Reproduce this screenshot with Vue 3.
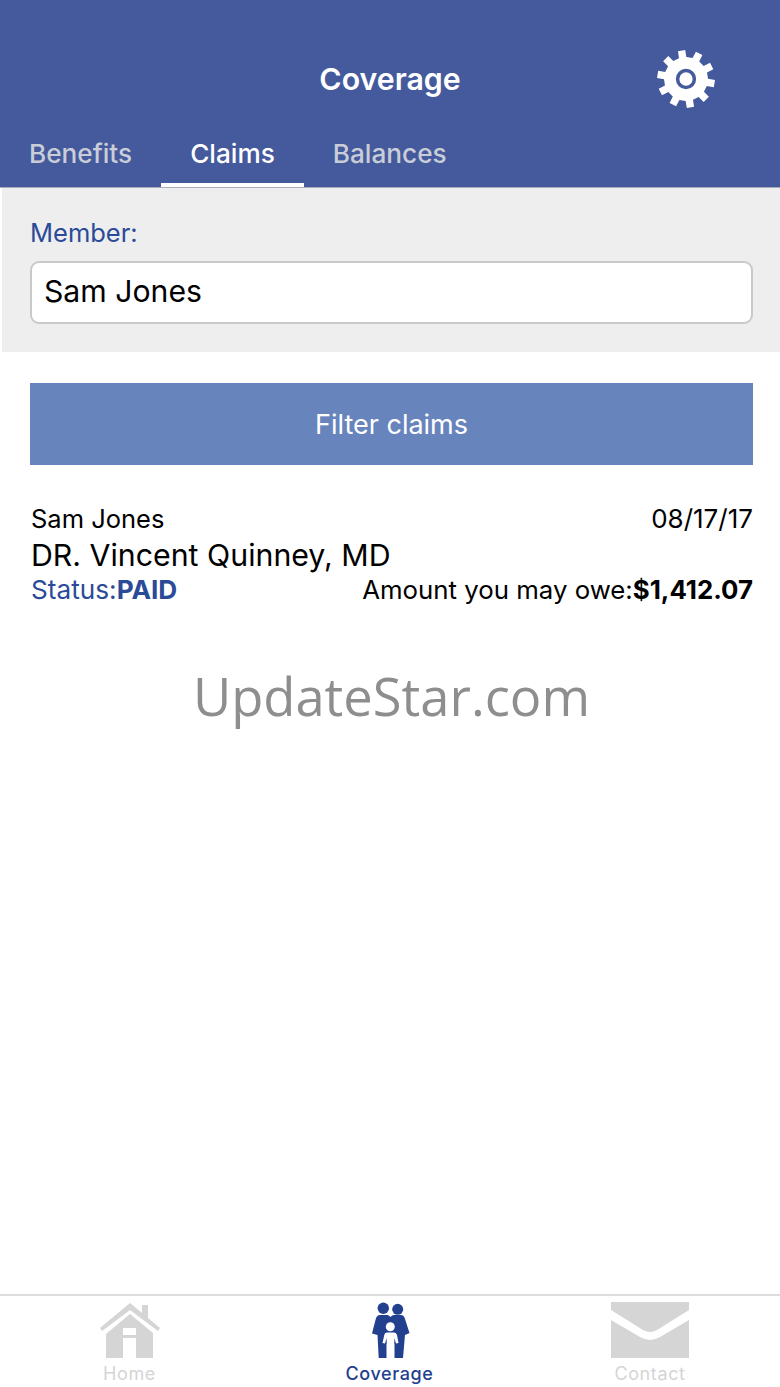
<script setup>
import { computed } from 'vue';

const tabs = [
  { label: 'Benefits' },
  { label: 'Claims', active: true },
  { label: 'Balances' },
];

// gear outline with 10 square-ish teeth
const gearPath = computed(() => {
  const teeth = 10;
  const cx = 30;
  const cy = 30;
  const inner = 22;
  const outer = 29;
  let d = '';
  for (let i = 0; i < teeth; i++) {
    const a = (i / teeth) * Math.PI * 2 + 0.16;
    const step = (Math.PI * 2) / teeth;
    const pts = [
      [inner, a - step * 0.27],
      [outer, a - step * 0.2],
      [outer, a + step * 0.2],
      [inner, a + step * 0.27],
    ];
    pts.forEach(([r, t], j) => {
      const x = (cx + r * Math.cos(t)).toFixed(2);
      const y = (cy + r * Math.sin(t)).toFixed(2);
      d += `${i === 0 && j === 0 ? 'M' : 'L'}${x} ${y} `;
    });
  }
  return d + 'Z';
});
</script>

<template>
  <div class="page">
    <header class="head">
      <div class="title-row">
        <h1 class="title">Coverage</h1>
        <svg class="gear" viewBox="0 0 60 60" aria-label="Settings">
          <path :d="gearPath" fill="#fff" />
          <circle cx="30" cy="30" r="8.400" fill="none" stroke="#445a9c" stroke-width="3.500" />
        </svg>
      </div>
      <nav class="tabs">
        <div v-for="t in tabs" :key="t.label" class="tab" :class="{ on: t.active }">{{ t.label }}</div>
      </nav>
    </header>

    <section class="member">
      <div class="member-label">Member:</div>
      <div class="member-input">Sam Jones</div>
    </section>

    <main class="content">
      <button class="filter">Filter claims</button>

      <div class="claim">
        <div class="row row-top">
          <span>Sam Jones</span>
          <span class="date">08/17/17</span>
        </div>
        <div class="doctor">DR. Vincent Quinney, MD</div>
        <div class="row row-bottom">
          <span class="status">Status:<b>PAID</b></span>
          <span>Amount you may owe:<b>$1,412.07</b></span>
        </div>
      </div>

      <div class="watermark">UpdateStar.com</div>
    </main>

    <footer class="tabbar">
      <div class="bar-item">
        <svg class="bar-icon" width="60" height="56" viewBox="0 0 60 56">
          <path d="M30 1 L42 11 V3 H48 V16 L60 26 L58 29 L30 8 L2 29 L0 26 Z" fill="#d5d5d5" />
          <path fill-rule="evenodd" d="M30 12 L53 31 V56 H36 V36 H23 V56 H6 V32 Z M23 26 V33 H36 V26 Z" fill="#d5d5d5" />
        </svg>
        <span>Home</span>
      </div>
      <div class="bar-item active">
        <svg class="bar-icon" width="40" height="56" viewBox="0 0 40 56">
          <circle cx="13.300" cy="6.300" r="5.700" fill="#23408f" />
          <circle cx="27.700" cy="7.300" r="5.500" fill="#23408f" />
          <path d="M10 13 H17 Q19 13 20.500 15 Q22 13 24 13 H31 Q34 13 35 17 L39.500 31 L35 33 L33 56 H24.300 V42 H16.700 V56 H8.700 L7.500 33 L2 31.500 L5.500 18 Q6.500 13 10 13 Z" fill="#23408f" />
          <circle cx="20.300" cy="24.700" r="4.500" fill="#fff" />
          <path d="M14.300 33 Q14.500 30.500 17 30.500 H24 Q26.500 30.500 27 33 L28.500 41 L26 41.500 L24.300 36 V56 H21 V43 H19.800 V56 H16.700 V36 L15 41.500 L12.500 41 Z" fill="#fff" />
        </svg>
        <span>Coverage</span>
      </div>
      <div class="bar-item">
        <svg class="bar-icon" width="78" height="56" viewBox="0 0 78 56">
          <path d="M0 0 H78 V8 L46 28 Q39 32 32 28 L0 8 Z" fill="#d5d5d5" />
          <path d="M0 18 L29 35 Q39 41 49 35 L78 18 V56 H0 Z" fill="#d5d5d5" />
        </svg>
        <span>Contact</span>
      </div>
    </footer>
  </div>
</template>

<style scoped>
.page {
  display: flex;
  flex-direction: column;
  min-height: 1387px;
  background: #fff;
  font-family: Inter, "Liberation Sans", sans-serif;
  color: #000;
}
.head {
  height: 188px;
  box-sizing: border-box;
  background: #445a9c;
  border-bottom: 1px solid #a9adb8;
  display: flex;
  flex-direction: column;
}
.title-row {
  position: relative;
  height: 120px;
  display: flex;
  align-items: flex-end;
  justify-content: center;
}
.title {
  margin: 0 0 21px;
  font-size: 30.300px;
  line-height: 40px;
  font-weight: 600;
  color: #fff;
}
.gear {
  position: absolute;
  left: 656px;
  top: 49px;
  width: 60px;
  height: 60px;
}
.tabs {
  display: flex;
  height: 67px;
}
.tab {
  box-sizing: border-box;
  padding: 14px 29px 0;
  font-size: 26.200px;
  line-height: 40px;
  font-weight: 500;
  color: #c9cdd8;
}
.tab.on {
  color: #fff;
  border-bottom: 4px solid #fff;
}
.member {
  margin-left: 2px;
  height: 164px;
  box-sizing: border-box;
  padding: 27px 27px 0 28px;
  background: #eeeeee;
}
.member-label {
  font-size: 25.500px;
  line-height: 36px;
  color: #2b4a98;
}
.member-input {
  margin-top: 10px;
  height: 63px;
  box-sizing: border-box;
  padding-left: 12px;
  background: #fff;
  border: 2px solid #c9c9c9;
  border-radius: 9px;
  font-size: 30.200px;
  line-height: 57px;
}
.content {
  flex: 1;
  padding: 31px 27px 0 30px;
}
.filter {
  display: block;
  width: 100%;
  height: 82px;
  border: 0;
  padding: 0;
  background: #6884bd;
  color: #fff;
  font-family: inherit;
  font-size: 27px;
}
.claim {
  margin-top: 37px;
  padding-left: 1px;
}
.row {
  display: flex;
  justify-content: space-between;
  align-items: baseline;
  font-size: 25.500px;
}
.row-top {
  line-height: 34px;
}
.date {
  font-size: 26px;
}
.doctor {
  font-size: 30.300px;
  line-height: 38px;
}
.row-bottom {
  font-size: 25.800px;
  line-height: 32px;
}
.row b {
  font-weight: 700;
}
.status {
  color: #2b4a98;
  font-size: 26.200px;
}
.watermark {
  margin-top: 52px;
  text-align: center;
  font-family: "Open Sans", sans-serif;
  font-size: 52.500px;
  line-height: 76px;
  color: #8e8e8e;
}
.tabbar {
  height: 93px;
  box-sizing: border-box;
  border-top: 2px solid #dddddd;
  display: grid;
  grid-template-columns: 259px 261px 260px;
}
.bar-item {
  display: flex;
  flex-direction: column;
  align-items: center;
  padding-top: 6px;
  font-size: 18px;
  line-height: 24px;
  color: #d5d5d5;
  letter-spacing: 0.6px;
  font-weight: 400;
}
.bar-item.active {
  color: #23408f;
  font-weight: 500;
}
.bar-icon {
  display: block;
  margin-bottom: 4px;
}
</style>

<style>
html, body {
  margin: 0;
  background: #fff;
}
</style>
